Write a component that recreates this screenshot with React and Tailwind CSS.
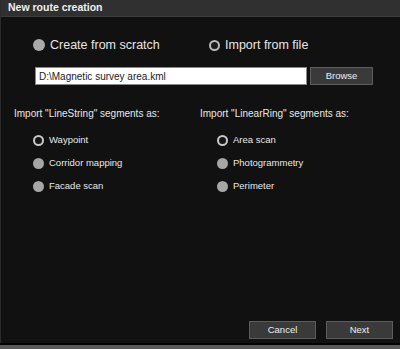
import React from "react";

const font = { fontFamily: '"Liberation Sans", Arial, sans-serif' };

function BigRadio({ checked, label }) {
  return (
    <div className="flex items-center gap-[5px]">
      {checked ? (
        <span className="w-[11px] h-[11px] rounded-full border-[2px] border-[#b8b8b8] bg-[#1a1a1a]" />
      ) : (
        <span className="w-[12px] h-[12px] rounded-full bg-[#a9a9a9]" />
      )}
      <span className="text-[12.5px] text-[#e6e6e6]">{label}</span>
    </div>
  );
}

function SmallRadio({ checked, label }) {
  return (
    <div className="flex items-center gap-[5px] h-[23px]">
      {checked ? (
        <span className="w-[11px] h-[11px] rounded-full border-[2px] border-[#c8c8c8] bg-[#151515]" />
      ) : (
        <span className="w-[11px] h-[11px] rounded-full bg-[#a6a6a6]" />
      )}
      <span className="text-[9.5px] text-[#e8e8e8]">{label}</span>
    </div>
  );
}

function Btn({ children, className }) {
  return (
    <div
      className={
        "h-[18px] flex items-center justify-center border border-[#5c5c5c] bg-[#3a3a3a] text-[9.5px] text-[#eeeeee] " +
        className
      }
    >
      {children}
    </div>
  );
}

export default function App() {
  return (
    <div style={font} className="w-[400px] h-[349px] bg-[#555] flex flex-col overflow-hidden">
      <div className="flex-1 flex flex-col bg-[#111111] border-l border-[#2a2a2a]">
        <div className="h-[17px] bg-[#303030] border-b border-[#3c3c3c] flex items-center pl-[7px]">
          <span className="text-[10.5px] font-bold text-[#f0f0f0]">New route creation</span>
        </div>
        <div className="flex pt-[19px] h-[34px]">
          <div className="pl-[32px] w-[176px]">
            <BigRadio label="Create from scratch" />
          </div>
          <div className="pl-[32px]">
            <BigRadio checked label="Import from file" />
          </div>
        </div>
        <div className="flex pl-[34px] mt-[16px] gap-[3px]">
          <div className="w-[272px] h-[18px] bg-white border border-[#888] flex items-center pl-[3px] text-[10px] text-[#222]">
            D:\Magnetic survey area.kml
          </div>
          <Btn className="w-[63px]">Browse</Btn>
        </div>
        <div className="flex mt-[21px]">
          <div className="w-[186px] pl-[13px]">
            <div className="text-[10px] text-[#e8e8e8]">Import "LineString" segments as:</div>
            <div className="pl-[19px] mt-[8px] flex flex-col">
              <SmallRadio checked label="Waypoint" />
              <SmallRadio label="Corridor mapping" />
              <SmallRadio label="Facade scan" />
            </div>
          </div>
          <div className="pl-[13px]">
            <div className="text-[10px] text-[#e8e8e8]">Import "LinearRing" segments as:</div>
            <div className="pl-[17px] mt-[8px] flex flex-col">
              <SmallRadio checked label="Area scan" />
              <SmallRadio label="Photogrammetry" />
              <SmallRadio label="Perimeter" />
            </div>
          </div>
        </div>
        <div className="flex-1" />
        <div className="flex justify-end gap-[10px] pr-[7px] pb-[4px]">
          <Btn className="w-[67px]">Cancel</Btn>
          <Btn className="w-[67px]">Next</Btn>
        </div>
      </div>
      <div className="h-[2px] bg-black" />
      <div className="h-[4px] bg-[#5a5a5a]" />
    </div>
  );
}
